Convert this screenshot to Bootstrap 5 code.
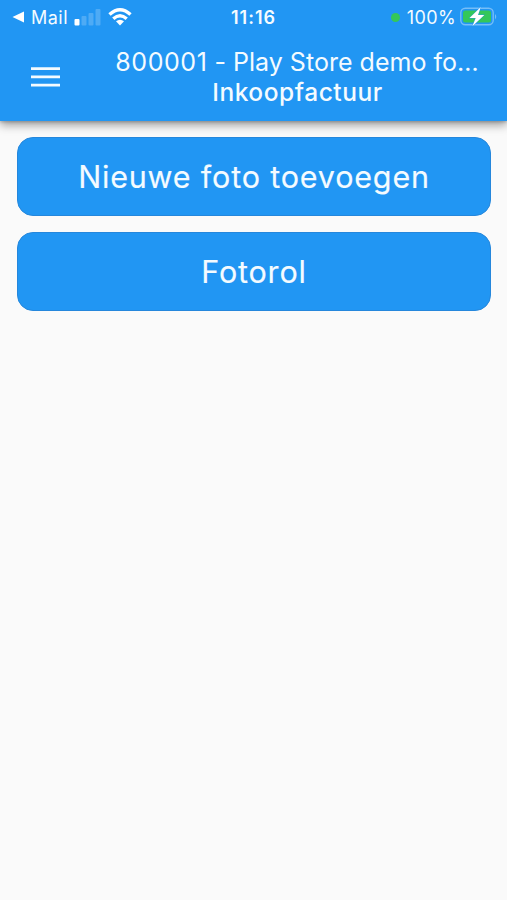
<!DOCTYPE html>
<html lang="nl">
<head>
<meta charset="utf-8">
<meta name="viewport" content="width=device-width, initial-scale=1">
<title>Inkoopfactuur</title>
<link href="https://cdn.jsdelivr.net/npm/bootstrap@5.3.0/dist/css/bootstrap.min.css" rel="stylesheet">
<style>
  body { font-family: Inter, "Liberation Sans", sans-serif; background: #fafafa; }
  svg { display: block; flex: none; }
  .app-header { height: 121px; background: #2196f3; color: #f4fbff; box-shadow: 0 4px 9px rgba(0,0,0,.38), 0 1px 3px rgba(0,0,0,.2); }
  .status { height: 34px; padding: 0 9px 0 12px; font-size: 18px; line-height: 34px; }
  .status > div { flex: 1 1 0; white-space: nowrap; }
  .status-time { font-weight: 600; font-size: 18px; letter-spacing: 1px; margin-right: 3px; padding-top: 1px; }
  .mail { margin: 0 6px 0 6px; letter-spacing: .5px; padding-top: 1px; }
  .wifi { margin-left: 7px; }
  .dot { width: 9px; height: 9px; background: #34c759; margin-right: 7px; }
  .percent { margin-right: 4px; letter-spacing: .4px; padding-top: 1px; }
  .app-bar { height: 87px; padding: 13px 28px 0 31px; }
  .menu-btn { margin: 20px 55px 0 0; }
  .title-line { font-size: 25px; line-height: 30px; letter-spacing: .02px; }
  .title-number { letter-spacing: .55px; }
  .subtitle-line { font-size: 24.5px; line-height: 30px; font-weight: 500; letter-spacing: .55px; padding-left: 1px; }
  .actions { padding: 16px 16px 0 17px; gap: 16px; }
  .action-btn { height: 79px; padding: 0; border: 1px solid #2587dc; border-radius: 16px; background: #2196f3; color: #f4fbff; font-size: 30.5px; font-weight: 400; letter-spacing: .82px; -webkit-text-stroke: .15px #f4fbff; }
</style>
</head>
<body>
<header class="app-header position-relative">
  <div class="status d-flex align-items-center">
    <div class="d-flex align-items-center">
      <svg width="13" height="12" viewBox="0 0 13 12"><path d="M.5 6 12 .5v11z" fill="#fff"/></svg>
      <span class="mail">Mail</span>
      <svg width="27" height="17" viewBox="0 0 27 17" fill="#fff"><rect x=".5" y="10" width="5" height="6.500" rx="1"/><g opacity=".2"><rect x="7.500" y="7" width="5" height="9.500" rx="1"/><rect x="14.500" y="4" width="5" height="12.500" rx="1"/><rect x="21.500" width="5" height="16.500" rx="1"/></g></svg>
      <svg class="wifi" width="24" height="18" viewBox="0 0 24 18" fill="none" stroke="#fff" stroke-width="3.400"><path d="M1.500 6.600Q12-3 22.500 6.600M5.300 10.700Q12 4.700 18.700 10.700"/><path d="M8 13.300Q12 10 16 13.300L12 17.500z" fill="#fff" stroke="none"/></svg>
    </div>
    <span class="status-time">11:16</span>
    <div class="d-flex align-items-center justify-content-end">
      <span class="dot rounded-circle"></span>
      <span class="percent">100%</span>
      <svg width="38" height="20" viewBox="0 0 38 20"><rect x=".8" y="1.300" width="32.400" height="16.400" rx="4.500" fill="none" stroke="#75bdf8" stroke-width="1.400"/><rect x="3" y="3.500" width="28" height="12" rx="2.500" fill="#34c759"/><path d="M35 7q2.500 2.700 0 5.400z" fill="#75bdf8"/><path d="M20.800 0 9.500 11h6.200L12.400 19.300 24.300 8H18z" fill="#fff" stroke="#2196f3" stroke-width=".8" paint-order="stroke"/></svg>
    </div>
  </div>
  <div class="app-bar d-flex align-items-start">
    <button class="menu-btn btn p-0 border-0 rounded-0" type="button" aria-label="Menu">
      <svg width="29" height="20" viewBox="0 0 29 20" fill="#f4fbff"><path d="M0 .3h29v2.700H0zM0 8.600h29v2.700H0zM0 16.700h29v2.700H0z"/></svg>
    </button>
    <div class="flex-grow-1 text-center text-nowrap">
      <div class="title-line"><span class="title-number">800001</span> - Play Store demo fo…</div>
      <div class="subtitle-line">Inkoopfactuur</div>
    </div>
  </div>
</header>
<main class="actions d-grid">
  <button class="action-btn btn w-100" type="button">Nieuwe foto toevoegen</button>
  <button class="action-btn btn w-100" type="button">Fotorol</button>
</main>
<script src="https://cdn.jsdelivr.net/npm/bootstrap@5.3.0/dist/js/bootstrap.bundle.min.js"></script>
</body>
</html>
